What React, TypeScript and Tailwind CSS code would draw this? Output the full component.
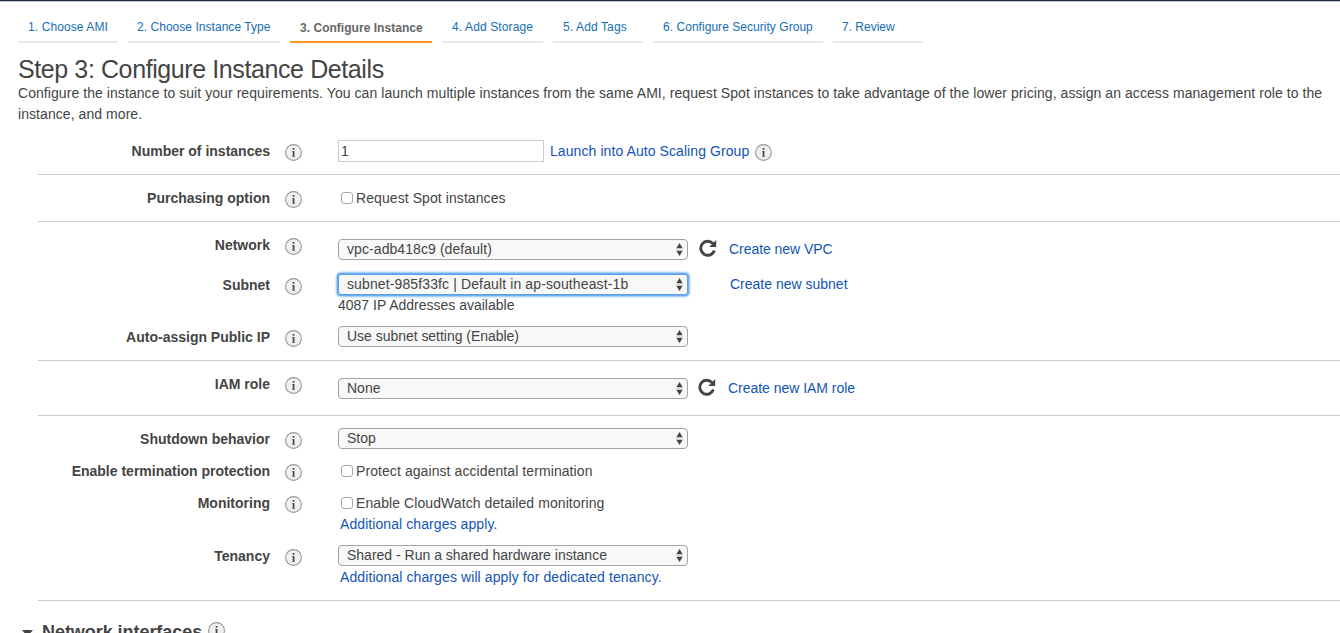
import type { ReactNode } from 'react';

const tabs = [
  { text: '1. Choose AMI', width: 'w-[100px]', spacing: 'tracking-[0.1px] pl-[10px]' },
  { text: '2. Choose Instance Type', width: 'w-[152px]', spacing: 'tracking-[0.04px] pl-[9px]' },
  { text: '3. Configure Instance', width: 'w-[142px]', spacing: 'tracking-[0.03px] pl-[10px]', active: true },
  { text: '4. Add Storage', width: 'w-[101px]', spacing: 'tracking-[0.12px] pl-[10px]' },
  { text: '5. Add Tags', width: 'w-[90px]', spacing: 'tracking-[0.12px] pl-[10px]' },
  { text: '6. Configure Security Group', width: 'w-[170px]', spacing: 'tracking-[0.04px] pl-[10px]' },
  { text: '7. Review', width: 'w-[90px]', spacing: 'tracking-[0px] pl-[9px]' },
];

function Info({ className = '' }: { className?: string }) {
  return (
    <svg className={`block size-[17px] shrink-0 ${className}`} viewBox="0 0 17 17">
      <circle cx="8.5" cy="8.5" r="7.9" fill="#efefef" stroke="#999" strokeWidth="1.1" />
      <path d="M7.7 4h1.7v1.7H7.7zM7.7 7h1.7v6H7.7z" fill="#444" />
      <path d="M7 7h1v.8H7zM7 12.4h3.2v.6H7z" fill="#777" />
    </svg>
  );
}

function Refresh() {
  return (
    <svg className="block size-[18px] shrink-0" viewBox="0 0 18 18">
      <path d="M14 4.6A7 7 0 1 0 15.4 11.6" fill="none" stroke="#444" strokeWidth="2.9" />
      <path d="M17.2 1V8H10.2z" fill="#444" />
    </svg>
  );
}

function Select({ children, focused = false, spacing = '' }: { children: ReactNode; focused?: boolean; spacing?: string }) {
  const frame = focused
    ? 'border-[#5a9ee6] rounded-[3px] shadow-[0_0_0_1px_#6eaef3,0_0_2px_2px_#8cc0f8]'
    : 'border-[#a3a3a3] rounded-[4px]';
  return (
    <div className={`flex h-[21px] w-[350px] shrink-0 items-center justify-between border bg-[#f8f8f8] pr-[4px] pl-[8px] ${frame}`}>
      <span className={`leading-[19px] whitespace-nowrap ${spacing}`}>{children}</span>
      <svg className="block h-[13px] w-[7px]" viewBox="0 0 7 13">
        <path d="M3.5 0L6.7 5.3H.3zM3.5 13L6.7 7.7H.3z" fill="#444" />
        <path d="M0 6.5H7" stroke="#ddd" strokeWidth="1" />
      </svg>
    </div>
  );
}

function Check({ children }: { children: ReactNode }) {
  return (
    <label className="flex h-5 items-center pl-[3px]">
      <span className="mr-[3px] size-[12px] rounded-[3px] border border-[#a6a6a6] bg-white" />
      <span className="tracking-[0.08px] whitespace-nowrap">{children}</span>
    </label>
  );
}

function Row({ label, className, children }: { label: string; className: string; children: ReactNode }) {
  return (
    <div className={`flex items-start ${className}`}>
      <div className="w-[232px] shrink-0 text-right font-bold whitespace-nowrap">{label}</div>
      <Info className="mt-[3px] mr-[36px] ml-[15px]" />
      <div className="shrink-0">{children}</div>
    </div>
  );
}

function Link({ children, className = '' }: { children: ReactNode; className?: string }) {
  return <a className={`whitespace-nowrap text-[#1254b5] ${className}`}>{children}</a>;
}

export default function App() {
  return (
    <div className="h-[633px] w-[1340px] overflow-hidden border-t border-[#232f3e] bg-white font-['Liberation_Sans',Arial,sans-serif] text-[14px] leading-5 text-[#444]">
      <div className="h-px bg-[#c4c6ce]" />
      <nav className="flex h-[41px] gap-[10px] pl-[18px] text-[12px]">
        {tabs.map((t) => (
          <div
            key={t.text}
            className={`flex shrink-0 border-b-2 whitespace-nowrap ${t.width} ${t.spacing} ${
              t.active ? 'border-[#ff9914] pt-[16px] font-bold text-[#666]' : 'border-[#eaeaea] pt-[15px] text-[#146eb4]'
            }`}
          >
            {t.text}
          </div>
        ))}
      </nav>

      <header className="h-[84px] pt-[12px] pl-[18px]">
        <h1 className="h-[28px] text-[25px] leading-[29px] tracking-[-0.4px]">Step 3: Configure Instance Details</h1>
        <p className="leading-[21px] tracking-[0.064px] whitespace-nowrap">
          Configure the instance to suit your requirements. You can launch multiple instances from the same AMI, request Spot instances to take advantage of the lower pricing, assign an access management role to the
          <br />
          instance, and more.
        </p>
      </header>

      <main className="ml-[38px]">
        <section className="h-[48px] border-b border-[#c9c9c9] pt-[14px]">
          <Row label="Number of instances" className="h-5">
            <div className="-mt-px flex items-start">
              <div className="h-[22px] w-[206px] border border-[#ccc] pl-[2px] leading-[21px]">1</div>
              <Link className="mt-px ml-[6px] tracking-[0.08px]">Launch into Auto Scaling Group</Link>
              <Info className="mt-[4px] ml-[6px]" />
            </div>
          </Row>
        </section>

        <section className="h-[47px] border-b border-[#c9c9c9] pt-[13px]">
          <Row label="Purchasing option" className="h-5">
            <Check>Request Spot instances</Check>
          </Row>
        </section>

        <section className="h-[139px] border-b border-[#c9c9c9] pt-[13px]">
          <Row label="Network" className="h-[40px]">
            <div className="flex h-[25px] items-start pt-[4px]">
              <Select spacing="tracking-[0.08px]">vpc-adb418c9 (default)</Select>
              <div className="ml-[11px]"><Refresh /></div>
              <Link className="ml-[12px] tracking-[-0.05px]">Create new VPC</Link>
            </div>
          </Row>
          <Row label="Subnet" className="h-[52px]">
            <div className="-mt-px flex h-[21px] items-start">
              <Select focused spacing="tracking-[0.12px]">subnet-985f33fc | Default in ap-southeast-1b</Select>
              <Link className="ml-[42px]">Create new subnet</Link>
            </div>
            <div>4087 IP Addresses available</div>
          </Row>
          <Row label="Auto-assign Public IP" className="h-5">
            <div className="-mt-px"><Select spacing="tracking-[-0.03px]">Use subnet setting (Enable)</Select></div>
          </Row>
        </section>

        <section className="h-[55px] border-b border-[#c9c9c9] pt-[13px]">
          <Row label="IAM role" className="h-5">
            <div className="flex h-[25px] items-start pt-[4px]">
              <Select>None</Select>
              <div className="ml-[10px]"><Refresh /></div>
              <Link className="ml-[12px] tracking-[-0.03px]">Create new IAM role</Link>
            </div>
          </Row>
        </section>

        <section className="h-[185px] border-b border-[#c9c9c9] pt-[13px]">
          <Row label="Shutdown behavior" className="h-[32px]">
            <div className="-mt-px"><Select>Stop</Select></div>
          </Row>
          <Row label="Enable termination protection" className="h-[32px]">
            <Check>Protect against accidental termination</Check>
          </Row>
          <Row label="Monitoring" className="h-[53px]">
            <Check>Enable CloudWatch detailed monitoring</Check>
            <Link className="mt-px ml-[2px] block tracking-[0.08px]">Additional charges apply.</Link>
          </Row>
          <Row label="Tenancy" className="h-5">
            <div className="-mt-px"><Select>Shared - Run a shared hardware instance</Select></div>
            <Link className="mt-px ml-[2px] block tracking-[0.1px]">Additional charges will apply for dedicated tenancy.</Link>
          </Row>
        </section>
      </main>

      <footer className="flex pt-[20px] pl-[22px]">
        <svg className="mt-[9px] block h-[7px] w-[11px]" viewBox="0 0 11 7">
          <path d="M0 0H11L5.5 6.5z" fill="#444" />
        </svg>
        <h2 className="ml-[9px] pt-px text-[18px] leading-5 font-bold tracking-[-0.05px]">Network interfaces</h2>
        <Info className="mt-px ml-[6px]" />
      </footer>
    </div>
  );
}
